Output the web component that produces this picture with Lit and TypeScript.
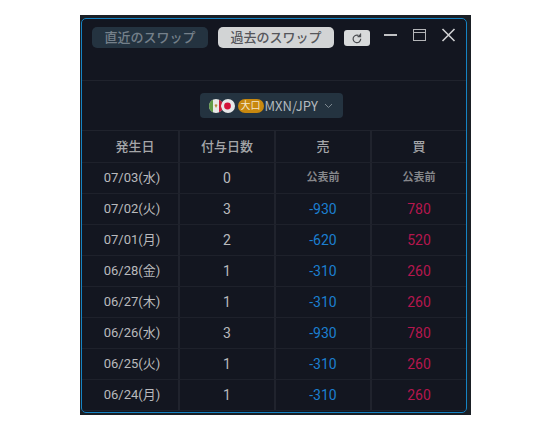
import { LitElement, html, css } from "lit";
import { customElement, state } from "lit/decorators.js";

interface SwapRow {
  date: string;
  days: number;
  sell: number | null;
  buy: number | null;
}

const ROWS: SwapRow[] = [
  { date: "07/03(水)", days: 0, sell: null, buy: null },
  { date: "07/02(火)", days: 3, sell: -930, buy: 780 },
  { date: "07/01(月)", days: 2, sell: -620, buy: 520 },
  { date: "06/28(金)", days: 1, sell: -310, buy: 260 },
  { date: "06/27(木)", days: 1, sell: -310, buy: 260 },
  { date: "06/26(水)", days: 3, sell: -930, buy: 780 },
  { date: "06/25(火)", days: 1, sell: -310, buy: 260 },
  { date: "06/24(月)", days: 1, sell: -310, buy: 260 },
];

@customElement("swap-table")
class SwapTable extends LitElement {
  static styles = css`
    :host {
      display: block;
      padding-bottom: 1px;
    }
    table {
      width: 100%;
      table-layout: fixed;
      border-collapse: separate;
      border-spacing: 0;
    }
    th,
    td {
      box-sizing: border-box;
      height: 31px;
      padding: 0;
      border-bottom: 1px solid #1e212b;
      border-left: 2px solid #20232d;
      text-align: center;
      font-weight: 400;
      font-size: 14px;
      line-height: 20px;
      color: #b9babd;
    }
    th {
      height: 32px;
      color: #a5a6a9;
      font-size: 13px;
      font-weight: 500;
    }
    th:first-child,
    td:first-child {
      border-left: 0;
    }
    th:first-child {
      padding-left: 10px;
    }
    td.date {
      padding-left: 4px;
      font-size: 13px;
    }
    td.sell {
      color: #1c7fd0;
    }
    td.buy {
      color: #b5174e;
    }
    td.pending {
      color: #86878b;
      font-size: 11px;
      font-weight: 700;
    }
  `;

  private amount(value: number | null, kind: string) {
    return value === null
      ? html`<td class="pending">公表前</td>`
      : html`<td class=${kind}>${value}</td>`;
  }

  render() {
    return html`
      <table>
        <thead>
          <tr>
            <th scope="col">発生日</th>
            <th scope="col">付与日数</th>
            <th scope="col">売</th>
            <th scope="col">買</th>
          </tr>
        </thead>
        <tbody>
          ${ROWS.map(
            (r) => html`<tr>
              <td class="date">${r.date}</td>
              <td>${r.days}</td>
              ${this.amount(r.sell, "sell")}${this.amount(r.buy, "buy")}
            </tr>`
          )}
        </tbody>
      </table>
    `;
  }
}

@customElement("app-root")
class AppRoot extends LitElement {
  @state() private tab = "past";

  static styles = css`
    :host {
      display: block;
      padding: 15px 79px 15px 80px;
      background: #ffffff;
      font-family: Roboto, "Noto Sans CJK JP", sans-serif;
    }
    .backdrop {
      padding: 3px 4px 2px 1px;
      background: #1a1f25;
    }
    .window {
      border: 1px solid #1583c4;
      border-radius: 5px;
      background: #131620;
      overflow: hidden;
    }
    .titlebar {
      display: flex;
      align-items: flex-start;
      justify-content: space-between;
      height: 53px;
      padding: 8px 10px 0;
      border-bottom: 1px solid #20232d;
    }
    .group {
      display: flex;
      align-items: center;
      gap: 10px;
    }
    button {
      display: flex;
      align-items: center;
      justify-content: center;
      margin: 0;
      padding: 0;
      border: 0;
      background: none;
      font-family: inherit;
    }
    .tab {
      width: 116px;
      height: 21px;
      border-radius: 5px;
      background: #243340;
      color: #75808a;
      font-size: 13px;
      font-weight: 500;
      line-height: 20px;
    }
    .tab.active {
      background: #d2d4d5;
      color: #55565b;
    }
    .refresh {
      width: 26px;
      height: 16px;
      border-radius: 3px;
      background: #d8dadb;
    }
    .controls {
      display: flex;
      gap: 14px;
    }
    .controls button {
      width: 15px;
      height: 16px;
    }
    .picker-bar {
      display: flex;
      justify-content: center;
      padding: 12px 6px 12px 0;
      border-bottom: 1px solid #20232d;
    }
    .picker {
      display: flex;
      align-items: center;
      box-sizing: border-box;
      width: 143px;
      height: 25px;
      padding: 0 10px 0 9px;
      border-radius: 4px;
      background: #243340;
    }
    .badge {
      margin: 0 1px 0 3px;
      width: 26px;
      height: 14px;
      border-radius: 7px;
      background: #c8880f;
      color: #f3e6cb;
      font-size: 10px;
      line-height: 14px;
      text-align: center;
    }
    select {
      flex: 1;
      min-width: 0;
      padding: 0;
      border: 0;
      appearance: none;
      background: none;
      color: #b4babf;
      font-family: "Noto Sans CJK JP", sans-serif;
      font-size: 13px;
      line-height: 20px;
    }
    svg {
      display: block;
      flex: none;
    }
  `;

  private tabButton(id: string, label: string) {
    return html`<button
      class="tab ${this.tab === id ? "active" : ""}"
      aria-pressed=${this.tab === id}
      @click=${() => (this.tab = id)}
    >${label}</button>`;
  }

  render() {
    return html`
      <div class="backdrop">
        <main class="window">
          <header class="titlebar">
            <div class="group">
              ${this.tabButton("recent", "直近のスワップ")}
              ${this.tabButton("past", "過去のスワップ")}
              <button class="refresh" aria-label="更新">
                <svg width="12" height="12" viewBox="0 0 12 12" fill="none">
                  <path d="M7.4 3.4 A3.8 3.8 0 1 0 9.7 6.8" stroke="#4a4c50" stroke-width="1.2" />
                  <path d="M6.6 4.6 L9.6 4.6 L9.6 1.4" stroke="#4a4c50" stroke-width="1.1" />
                  <path d="M6.6 4.6 L9.6 1.4 V4.6 Z" fill="#4a4c50" />
                </svg>
              </button>
            </div>
            <div class="controls">
              <button aria-label="最小化">
                <svg width="15" height="16" viewBox="0 0 15 16">
                  <path d="M1 8 H14" stroke="#c0c1c3" stroke-width="2" />
                </svg>
              </button>
              <button aria-label="最大化">
                <svg width="15" height="16" viewBox="0 0 15 16" fill="none" stroke="#b4b5b8">
                  <rect x="1.5" y="2.5" width="12" height="11" />
                  <path d="M1.5 5.5 H13.5" />
                </svg>
              </button>
              <button aria-label="閉じる">
                <svg width="15" height="16" viewBox="0 0 15 16">
                  <path d="M1.5 2 L13.5 14 M13.5 2 L1.5 14" stroke="#d0d1d3" stroke-width="1.6" />
                </svg>
              </button>
            </div>
          </header>
          <div class="picker-bar">
            <label class="picker">
              <svg width="26" height="14" viewBox="0 0 26 14">
                <clipPath id="mx"><circle cx="7" cy="7" r="7" /></clipPath>
                <g clip-path="url(#mx)">
                  <rect width="14" height="14" fill="#e8e8e6" />
                  <rect width="4" height="14" fill="#5f9a45" />
                  <rect x="10" width="4" height="14" fill="#c81e3c" />
                  <path d="M5.5 6 Q7 4.5 8.5 6 L7 9 Z" fill="#b58a3c" />
                </g>
                <circle cx="19" cy="7" r="7" fill="#e6e7e8" />
                <circle cx="18.5" cy="7" r="3.4" fill="#d3123a" />
                <path d="M12.6 2.8 A7 7 0 0 0 12.6 11.2" stroke="#c81e3c" stroke-width="1.6" fill="none" />
              </svg>
              <span class="badge">大口</span>
              <select aria-label="通貨ペア">
                <option>MXN/JPY</option>
              </select>
              <svg width="9" height="6" viewBox="0 0 9 6" fill="none">
                <path d="M1 1 L4.5 4.5 L8 1" stroke="#7d8890" />
              </svg>
            </label>
          </div>
          <swap-table></swap-table>
        </main>
      </div>
    `;
  }
}
